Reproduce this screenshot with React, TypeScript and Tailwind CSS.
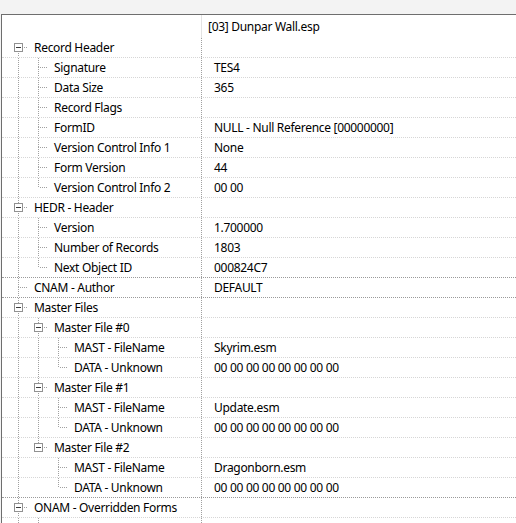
import React from "react";

type TNode = { label: string; value?: string; children?: TNode[] };

const tree: TNode[] = [
  {
    label: "Record Header",
    children: [
      { label: "Signature", value: "TES4" },
      { label: "Data Size", value: "365" },
      { label: "Record Flags" },
      { label: "FormID", value: "NULL - Null Reference [00000000]" },
      { label: "Version Control Info 1", value: "None" },
      { label: "Form Version", value: "44" },
      { label: "Version Control Info 2", value: "00 00" },
    ],
  },
  {
    label: "HEDR - Header",
    children: [
      { label: "Version", value: "1.700000" },
      { label: "Number of Records", value: "1803" },
      { label: "Next Object ID", value: "000824C7" },
    ],
  },
  { label: "CNAM - Author", value: "DEFAULT" },
  {
    label: "Master Files",
    children: [0, 1, 2].map((i) => ({
      label: `Master File #${i}`,
      children: [
        { label: "MAST - FileName", value: ["Skyrim.esm", "Update.esm", "Dragonborn.esm"][i] },
        { label: "DATA - Unknown", value: "00 00 00 00 00 00 00 00" },
      ],
    })),
  },
  { label: "ONAM - Overridden Forms", children: [{ label: "" }, { label: "" }] },
  { label: "" },
];

type Row = {
  node: TNode;
  level: number;
  cont: boolean[];
  hasTop: boolean;
  hasNext: boolean;
  expandable: boolean;
};

function flatten(nodes: TNode[], level: number, cont: boolean[], out: Row[]) {
  nodes.forEach((n, i) => {
    const hasNext = i < nodes.length - 1;
    out.push({
      node: n,
      level,
      cont,
      hasTop: !(level === 0 && i === 0),
      hasNext,
      expandable: !!n.children,
    });
    if (n.children) flatten(n.children, level + 1, [...cont, hasNext], out);
  });
  return out;
}

const rows = flatten(tree, 0, [], []);
const darkRows = new Set([11, 12, 22]);

const LINE = "#a0a0a0";

function Guides({ r }: { r: Row }) {
  const w = 20 * (r.level + 1);
  const items: React.ReactNode[] = [];
  r.cont.forEach((c, k) => {
    if (c) {
      const x = 20 * k + 10.5;
      items.push(<line key={"c" + k} x1={x} y1={0} x2={x} y2={20} />);
    }
  });
  const cx = 20 * r.level + 10.5;
  if (r.hasTop) items.push(<line key="t" x1={cx} y1={0} x2={cx} y2={10} />);
  if (r.hasNext) items.push(<line key="b" x1={cx} y1={9} x2={cx} y2={20} />);
  items.push(
    <line
      key="h"
      x1={r.expandable ? cx + 5.5 : cx + 1.5}
      y1={9.5}
      x2={cx + 12}
      y2={9.5}
    />
  );
  return (
    <svg width={w} height={19} className="shrink-0 block" shapeRendering="crispEdges">
      <g stroke={LINE} strokeWidth={1} strokeDasharray="1 1" fill="none">
        {items}
      </g>
      {r.expandable && (
        <g shapeRendering="crispEdges">
          <rect x={cx - 4} y={5.5} width={8} height={8} fill="#ffffff" stroke="#919191" />
          <line x1={cx - 2.5} y1={9.5} x2={cx + 2.5} y2={9.5} stroke="#3b3b3b" />
        </g>
      )}
    </svg>
  );
}

export default function App() {
  return (
    <div
      className="h-[523px] w-[516px] overflow-hidden bg-[#f3f3f3] pl-px pt-[14px] text-[12px] tracking-[-0.3px] text-black"
      style={{ fontFamily: '"Noto Sans", "Liberation Sans", sans-serif' }}
    >
      <div className="h-full border-l border-t border-[#6e6e6e] bg-white">
        <div className="flex h-[23px] items-center">
          <div className="h-full w-[200px] shrink-0 border-r border-[#e3e3e3]" />
          <div className="pl-[6px] leading-[23px]">[03] Dunpar Wall.esp</div>
        </div>
        {rows.map((r, i) => (
          <div
            key={i}
            className={
              "flex h-[20px] border-b border-dotted " +
              (darkRows.has(i) ? "border-[#9a9a9a]" : "border-[#d6d6d6]")
            }
          >
            <div className="flex h-[19px] w-[200px] shrink-0 items-center border-r border-dotted border-[#a0a0a0] pl-[6px]">
              <Guides r={r} />
              <span className="ml-[6px] whitespace-nowrap leading-[19px]">{r.node.label}</span>
            </div>
            <div className="h-[19px] whitespace-nowrap pl-[12px] leading-[19px]">{r.node.value ?? ""}</div>
          </div>
        ))}
      </div>
    </div>
  );
}
